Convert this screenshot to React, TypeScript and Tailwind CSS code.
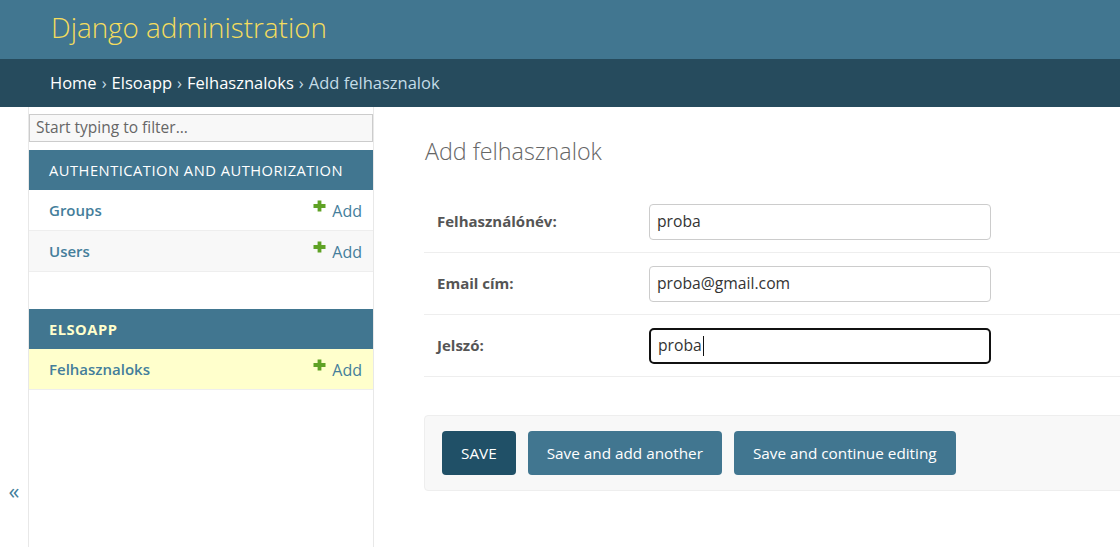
import React from "react";

function PlusIcon() {
  return (
    <svg width="13" height="12" viewBox="0 0 13 12" className="inline-block mr-[6px] -mt-[9px]">
      <path fill="#5fa225" d="M4.6 0.5h3.8v3.6h4.1v3.8h-4.1v3.6h-3.8v-3.6h-4.1v-3.8h4.1z" />
    </svg>
  );
}

function ModelRow({ name, alt, current }: { name: string; alt?: boolean; current?: boolean }) {
  return (
    <div
      className={`h-[41px] flex items-center justify-between pl-[20px] pr-[11px] border-b border-[#eee] ${
        current ? "bg-[#ffffcc]" : alt ? "bg-[#f8f8f8]" : "bg-white"
      }`}
    >
      <span className="text-[15px] font-semibold text-[#447e9b] mt-[1px]">{name}</span>
      <span className="text-[16px] text-[#447e9b] flex items-center mt-[1px]">
        <PlusIcon />
        Add
      </span>
    </div>
  );
}

function FormRow({ label, value, focused }: { label: string; value: string; focused?: boolean }) {
  return (
    <div className="h-[62px] flex items-center border-b border-[#eee] pl-[13px]">
      <div className="w-[212px] text-[15px] font-bold text-[#555]">{label}</div>
      <div
        className={`w-[342px] h-[36px] rounded-[4px] flex items-center px-[7px] text-[15.7px] text-[#333] bg-white ${
          focused ? "border-2 border-[#111] rounded-[5px] px-[6px]" : "border border-[#ccc]"
        }`}
      >
        {value}
        {focused && <span className="inline-block w-px h-[20px] bg-[#111] ml-px" />}
      </div>
    </div>
  );
}

export default function App() {
  return (
    <div className="w-[1120px] h-[547px] overflow-hidden bg-white font-['Open_Sans',sans-serif] text-[#333]">
      <div className="h-[59px] bg-[#417690] px-[51px] flex items-center">
        <span className="text-[27.8px] font-light text-[#f5dd5d] leading-none -mt-[3px]">Django administration</span>
      </div>
      <div className="h-[48px] bg-[#264b5d] px-[50px] flex items-center text-[16.5px] text-[#c4dce8]">
        <span className="text-white">Home</span>
        <span className="mx-[5px]">›</span>
        <span className="text-white">Elsoapp</span>
        <span className="mx-[5px]">›</span>
        <span className="text-white">Felhasznaloks</span>
        <span className="mx-[5px]">›</span>
        <span>Add felhasznalok</span>
      </div>
      <div className="flex h-[440px]">
        <div className="w-[29px] border-r border-[#e8e8e8] flex justify-center pt-[372px]">
          <span className="text-[22px] text-[#447e9b] leading-none">«</span>
        </div>
        <div className="w-[345px] border-r border-[#e8e8e8]">
          <div className="pt-[7px] pb-[8px]">
            <div className="h-[28px] border border-[#ccc] bg-[#f8f8f8] flex items-center px-[6px] text-[15.5px] text-[#666]">
              Start typing to filter...
            </div>
          </div>
          <div className="h-[40px] bg-[#417690] flex items-center px-[20px] text-[14.7px] text-white tracking-[0.5px]">
            AUTHENTICATION AND AUTHORIZATION
          </div>
          <ModelRow name="Groups" />
          <ModelRow name="Users" alt />
          <div className="h-[37px]" />
          <div className="h-[40px] bg-[#417690] flex items-center px-[20px] text-[14.7px] font-bold text-[#ffffcc] tracking-[0.5px]">
            ELSOAPP
          </div>
          <ModelRow name="Felhasznaloks" current />
        </div>
        <div className="flex-1 pl-[50px] pt-[25px] overflow-hidden">
          <h1 className="text-[23.3px] font-light text-[#666] leading-[36px] mb-[22px] mt-[1px] pl-[1px]">Add felhasznalok</h1>
          <div className="mr-[-10px]">
            <FormRow label="Felhasználónév:" value="proba" />
            <FormRow label="Email cím:" value="proba@gmail.com" />
            <FormRow label="Jelszó:" value="proba" focused />
          </div>
          <div className="mt-[38px] mr-[-10px] h-[76px] bg-[#f8f8f8] border border-[#eee] rounded-[4px] flex items-center gap-[12px] pl-[17px]">
            <div className="h-[44px] rounded-[4px] bg-[#205067] text-white text-[15.3px] px-[19px] flex items-center">SAVE</div>
            <div className="h-[44px] rounded-[4px] bg-[#417690] text-white text-[15.3px] px-[19px] flex items-center">Save and add another</div>
            <div className="h-[44px] rounded-[4px] bg-[#417690] text-white text-[15.3px] px-[19px] flex items-center">Save and continue editing</div>
          </div>
        </div>
      </div>
    </div>
  );
}
